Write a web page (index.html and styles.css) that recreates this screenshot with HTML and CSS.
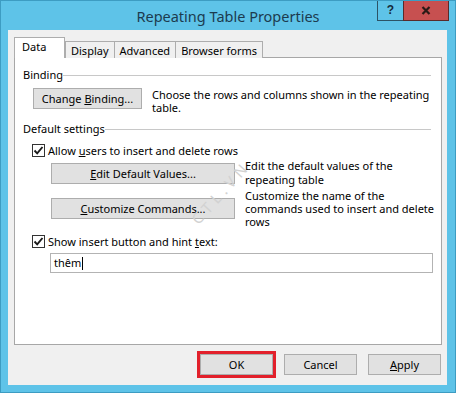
FILE: index.html
```html
<!DOCTYPE html>
<html lang="en">
<head>
    <meta charset="UTF-8">
    <title>Repeating Table Properties</title>
    <link rel="stylesheet" href="styles.css">
</head>
<body>
    <div class="window">
        <div class="titlebar">
            <span></span>
            <span class="title">Repeating Table Properties</span>
            <div class="caption-buttons">
                <span class="btn-help">?</span>
                <span class="btn-close">
                    <svg width="10" height="9" viewBox="0 0 10 9">
                        <path d="M1.5 1 L8.5 8 M8.5 1 L1.5 8" stroke="#2b1a16" stroke-width="2.2" fill="none"/>
                    </svg>
                </span>
            </div>
        </div>

        <div class="client">
            <div class="tabs">
                <span class="tab active">Data</span>
                <span class="tab">Display</span>
                <span class="tab">Advanced</span>
                <span class="tab">Browser forms</span>
            </div>

            <div class="panel">
                <div class="group-label"><span>Binding</span></div>
                <div class="binding-row">
                    <button class="btn btn-binding">Change <u>B</u>inding...</button>
                    <p class="desc">Choose the rows and columns shown in the repeating<br>table.</p>
                </div>

                <div class="group-label group-default"><span>Default settings</span></div>
                <div class="check-row">
                    <span class="checkbox">
                        <svg width="11" height="11" viewBox="0 0 11 11">
                            <path d="M1.5 5.5 L4.2 8.3 L9.5 2" stroke="#1a1a1a" stroke-width="1.9" fill="none"/>
                        </svg>
                    </span>
                    <span>Allow <u>u</u>sers to insert and delete rows</span>
                </div>

                <div class="cmd-row">
                    <button class="btn btn-cmd"><u>E</u>dit Default Values...</button>
                    <p class="desc desc-edit">Edit the default values of the<br>repeating table</p>
                </div>
                <div class="cmd-row">
                    <button class="btn btn-cmd"><u>C</u>ustomize Commands...</button>
                    <p class="desc">Customize the name of the<br>commands used to insert and delete<br>rows</p>
                </div>

                <div class="check-row check-show">
                    <span class="checkbox">
                        <svg width="11" height="11" viewBox="0 0 11 11">
                            <path d="M1.5 5.5 L4.2 8.3 L9.5 2" stroke="#1a1a1a" stroke-width="1.9" fill="none"/>
                        </svg>
                    </span>
                    <span>Show insert button and hint <u>t</u>ext:</span>
                </div>
                <div class="textbox">thêm<span class="caret"></span></div>

                <span class="watermark">CTL.VN</span>
            </div>

            <div class="footer">
                <button class="btn btn-footer btn-ok">OK</button>
                <button class="btn btn-footer">Cancel</button>
                <button class="btn btn-footer"><u>A</u>pply</button>
            </div>
        </div>
    </div>
</body>
</html>
```

FILE: styles.css
```css
body {
    margin: 0;
    padding: 0;
    font-family: "Noto Sans", "Open Sans", sans-serif;
    font-size: 11px;
    color: #000;
}
.window {
    width: 456px;
    height: 393px;
    box-sizing: border-box;
    background-color: #5ec3e8;
    border: 1px solid #3d9cc2;
    display: flex;
    flex-direction: column;
}
.titlebar {
    height: 29px;
    display: grid;
    grid-template-columns: 1fr auto 1fr;
    align-items: start;
}
.title {
    font-size: 14.5px;
    color: #1c3b4f;
    line-height: 30px;
}
.caption-buttons {
    justify-self: end;
    display: flex;
    margin-right: 6px;
}
.btn-help {
    width: 26px;
    height: 20px;
    box-sizing: border-box;
    border: 1px solid #2c5366;
    border-top: none;
    border-right: none;
    font-family: "Liberation Sans", sans-serif;
    font-weight: bold;
    font-size: 12px;
    color: #16293a;
    text-align: center;
    line-height: 19px;
}
.btn-close {
    width: 46px;
    height: 20px;
    box-sizing: border-box;
    background-color: #c75050;
    border: 1px solid #5a2a2a;
    border-top: none;
    display: flex;
    align-items: center;
    justify-content: center;
}
.client {
    flex: 1;
    margin: 0 8px 7px 7px;
    background-color: #f0f0f0;
    padding: 8px 5px 0 6px;
    display: flex;
    flex-direction: column;
}
.tabs {
    display: flex;
    align-items: flex-end;
    height: 20px;
    position: relative;
    z-index: 1;
    margin-bottom: -1px;
}
.tab {
    height: 17px;
    box-sizing: border-box;
    padding: 0 5px;
    border: 1px solid #adadad;
    border-bottom: none;
    background-color: #f0f0f0;
    line-height: 17px;
    margin-left: -1px;
}
.tab.active {
    height: 21px;
    margin-left: 0;
    margin-right: 1px;
    padding: 0 8px 0 7px;
    width: 51px;
    background-color: #fff;
    line-height: 17px;
}
.panel {
    height: 288px;
    box-sizing: border-box;
    background-color: #fff;
    border: 1px solid #a7a7a7;
    padding: 9px 10px 0 8px;
    position: relative;
}
.group-label {
    display: flex;
    align-items: center;
    line-height: 15px;
}
.group-label::after {
    content: "";
    flex: 1;
    height: 1px;
    background-color: #c8c8c8;
    margin-top: 1px;
}
.group-default {
    margin-top: 7px;
}
.btn {
    font-family: inherit;
    font-size: inherit;
    color: #000;
    background-color: #e1e1e1;
    border: 1px solid #adadad;
    padding: 0;
    height: 21px;
    border-radius: 0;
    white-space: nowrap;
}
.desc {
    margin: 0;
    line-height: 13px;
    white-space: nowrap;
}
.binding-row {
    display: flex;
    gap: 10px;
    margin: 6px 0 0 10px;
}
.btn-binding {
    width: 109px;
    flex-shrink: 0;
}
.check-row {
    display: flex;
    align-items: center;
    gap: 3px;
    margin: 8px 0 0 9px;
    line-height: 13px;
}
.check-show {
    margin-top: 7px;
}
.checkbox {
    width: 13px;
    height: 13px;
    box-sizing: border-box;
    border: 1px solid #333;
    display: flex;
    align-items: center;
    justify-content: center;
}
.cmd-row {
    display: flex;
    align-items: center;
    gap: 10px;
    margin: 2px 0 0 28px;
}
.btn-cmd {
    width: 184px;
    flex-shrink: 0;
}
.desc-edit {
    line-height: 14px;
}
.textbox {
    width: 383px;
    height: 20px;
    box-sizing: border-box;
    margin: 5px 0 0 27px;
    border: 1px solid #b3b3b3;
    padding: 0 3px;
    line-height: 18px;
    display: flex;
    align-items: center;
}
.caret {
    width: 1px;
    height: 13px;
    background-color: #000;
    margin-left: 1px;
}
.watermark {
    position: absolute;
    left: 166px;
    top: 124px;
    font-size: 15px;
    line-height: 20px;
    letter-spacing: 5px;
    color: #d2d2d2;
    transform: rotate(-48deg);
    pointer-events: none;
}
.footer {
    display: flex;
    justify-content: flex-end;
    gap: 11px;
    padding: 9px 1px 0 0;
}
.btn-footer {
    width: 73px;
}
.btn-ok {
    outline: 3px solid #e2202b;
}
```
